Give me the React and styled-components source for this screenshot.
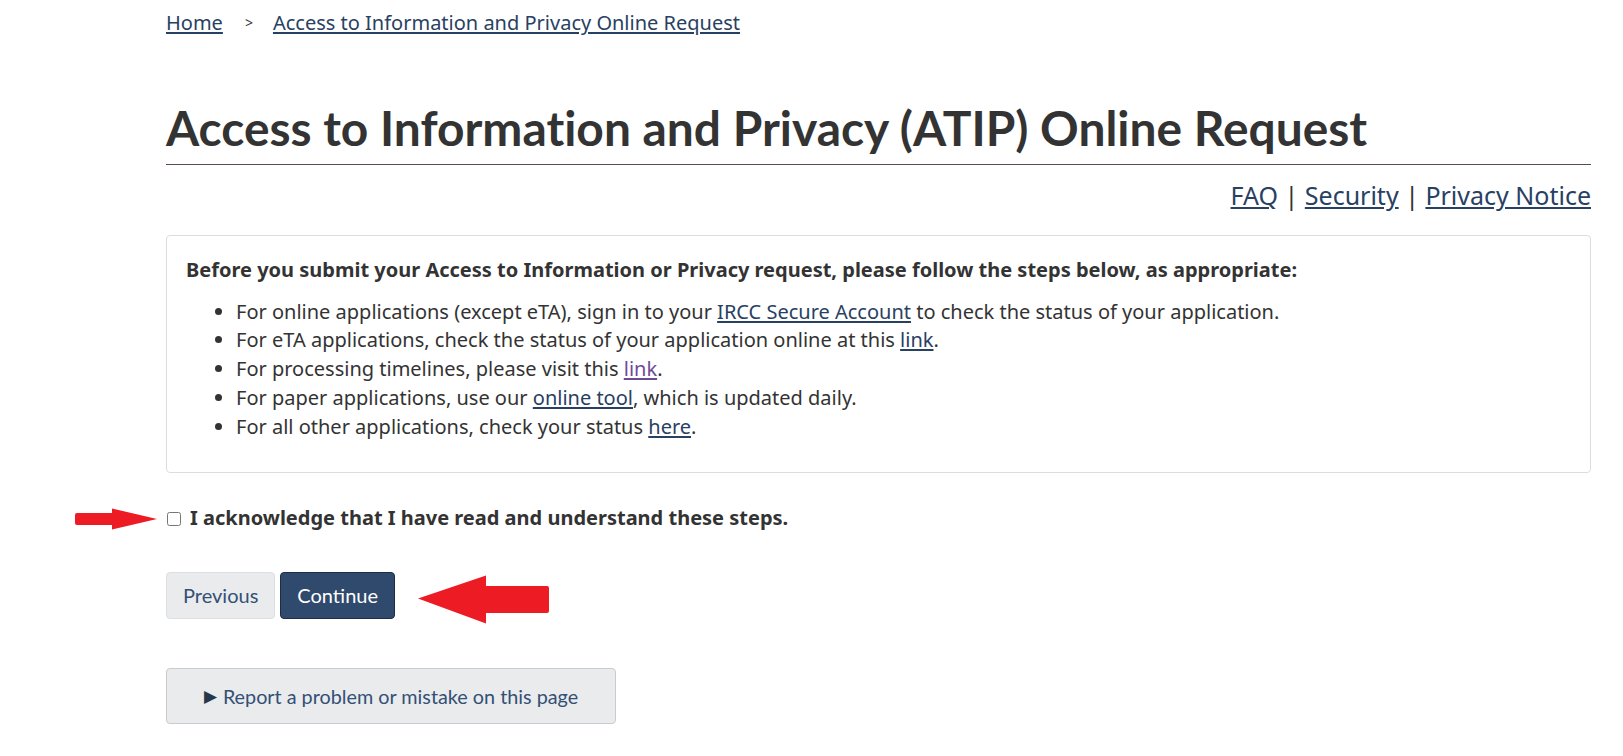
import React from 'react'
import styled, { createGlobalStyle } from 'styled-components'

const GlobalStyle = createGlobalStyle`
  body {
    margin: 0;
    background: #fff;
    color: #333;
    font-family: "Noto Sans", "DejaVu Sans", sans-serif;
    font-size: 20px;
    line-height: 1.4375;
  }
`

const steps = [
  { before: 'For online applications (except eTA), sign in to your ', link: 'IRCC Secure Account', after: ' to check the status of your application.' },
  { before: 'For eTA applications, check the status of your application online at this ', link: 'link', after: '.' },
  { before: 'For processing timelines, please visit this ', link: 'link', after: '.', visited: true },
  { before: 'For paper applications, use our ', link: 'online tool', after: ', which is updated daily.' },
  { before: 'For all other applications, check your status ', link: 'here', after: '.' },
]

const RightArrow = () => (
  <svg width="82" height="22" viewBox="0 0 82 22">
    <path d="M2 5 H37 V0.5 L82 11 L37 21.5 V17 H2 Q0 17 0 15 V7 Q0 5 2 5 Z" fill="#ed1c24" />
  </svg>
)

const LeftArrow = () => (
  <svg width="132" height="49" viewBox="0 0 132 49">
    <path d="M0 23.5 L68 0.5 V11 H129 Q131 11 131 13 V36 Q131 38 129 38 H68 V48.5 Z" fill="#ed1c24" />
  </svg>
)

export default function App() {
  return (
    <Page>
      <GlobalStyle />
      <Breadcrumb>
        <Crumb><a href="#">Home</a></Crumb>
        <Crumb><a href="#">Access to Information and Privacy Online Request</a></Crumb>
      </Breadcrumb>

      <Title>Access to Information and Privacy (ATIP) Online Request</Title>

      <TopLinks>
        <a href="#">FAQ</a>
        <Sep>|</Sep>
        <a href="#">Security</a>
        <Sep>|</Sep>
        <a href="#">Privacy Notice</a>
      </TopLinks>

      <Panel>
        <Intro>Before you submit your Access to Information or Privacy request, please follow the steps below, as appropriate:</Intro>
        <Steps>
          {steps.map((s, i) => (
            <li key={i}>
              {s.before}
              <StepLink href="#" $visited={s.visited}>{s.link}</StepLink>
              {s.after}
            </li>
          ))}
        </Steps>
      </Panel>

      <AckRow>
        <AckArrow><RightArrow /></AckArrow>
        <Checkbox type="checkbox" id="ack" />
        <AckLabel htmlFor="ack">I acknowledge that I have read and understand these steps.</AckLabel>
      </AckRow>

      <Actions>
        <Button type="button">Previous</Button>
        <Button type="button" $primary>Continue</Button>
        <ContinueArrow><LeftArrow /></ContinueArrow>
      </Actions>

      <Report type="button">
        <Triangle>&#9654;</Triangle>
        Report a problem or mistake on this page
      </Report>
    </Page>
  )
}

const Page = styled.main`
  width: 1425px;
  margin-left: 166px;
  padding-bottom: 34px;

  a {
    color: #284162;
    text-decoration: underline;
    text-underline-offset: 2px;
  }
`

const Breadcrumb = styled.ol`
  display: flex;
  list-style: none;
  margin: 0;
  padding: 9px 0 0;
`

const Crumb = styled.li`
  display: flex;
  align-items: center;

  & + &::before {
    content: '>';
    font-size: 14px;
    color: #333;
    margin: 0 20px 0 22px;
  }
`

const Title = styled.h1`
  margin: 64px 0 0;
  padding-bottom: 10px;
  border-bottom: 1px solid #5c4a4f;
  font-family: Lato, "Liberation Sans", sans-serif;
  font-weight: 700;
  font-size: 47.9px;
  line-height: 1.1;
  font-variant-ligatures: none;
  color: #333;
`

const TopLinks = styled.div`
  display: flex;
  justify-content: flex-end;
  align-items: baseline;
  margin-top: 13px;
  font-size: 25px;
  line-height: 34.5px;
`

const Sep = styled.span`
  margin: 0 6.5px;
`

const Panel = styled.section`
  margin-top: 22px;
  border: 1px solid #ddd;
  border-radius: 4px;
  padding: 20px 19px 31px;
`

const Intro = styled.p`
  margin: 0 0 13px;
  font-weight: 700;
`

const Steps = styled.ul`
  margin: 0;
  padding-left: 50px;
`

const StepLink = styled.a`
  && {
    color: ${p => (p.$visited ? '#6e4a96' : '#284162')};
  }
`

const AckRow = styled.div`
  position: relative;
  display: flex;
  align-items: center;
  margin-top: 31px;
`

const AckArrow = styled.span`
  position: absolute;
  left: -91px;
  top: 4px;
  display: flex;
`

const Checkbox = styled.input`
  width: 14px;
  height: 14px;
  margin: 0 9px 0 1px;
`

const AckLabel = styled.label`
  font-weight: 700;
`

const Actions = styled.div`
  position: relative;
  display: flex;
  gap: 5px;
  margin-top: 39px;
`

const Button = styled.button`
  font-family: Lato, "Liberation Sans", sans-serif;
  font-size: 20px;
  line-height: 1.4375;
  padding: 8px 16px;
  border-radius: 4px;
  border: 1px solid ${p => (p.$primary ? '#1c2e45' : '#dcdee1')};
  background: ${p => (p.$primary ? '#2f4a6c' : '#eaebed')};
  color: ${p => (p.$primary ? '#fff' : '#335075')};
  cursor: pointer;
`

const ContinueArrow = styled.span`
  position: absolute;
  left: 252px;
  top: 3px;
  display: flex;
`

const Report = styled.button`
  display: flex;
  align-items: center;
  justify-content: center;
  margin-top: 49px;
  width: 450px;
  padding: 13px 15px;
  border-radius: 4px;
  border: 1px solid #c9cbcf;
  background: #eaebed;
  color: #335075;
  font-family: Lato, "Liberation Sans", sans-serif;
  font-size: 19.8px;
  line-height: 1.4375;
  cursor: pointer;
`

const Triangle = styled.span`
  font-size: 17px;
  margin-right: 6px;
  color: #26374a;
`
